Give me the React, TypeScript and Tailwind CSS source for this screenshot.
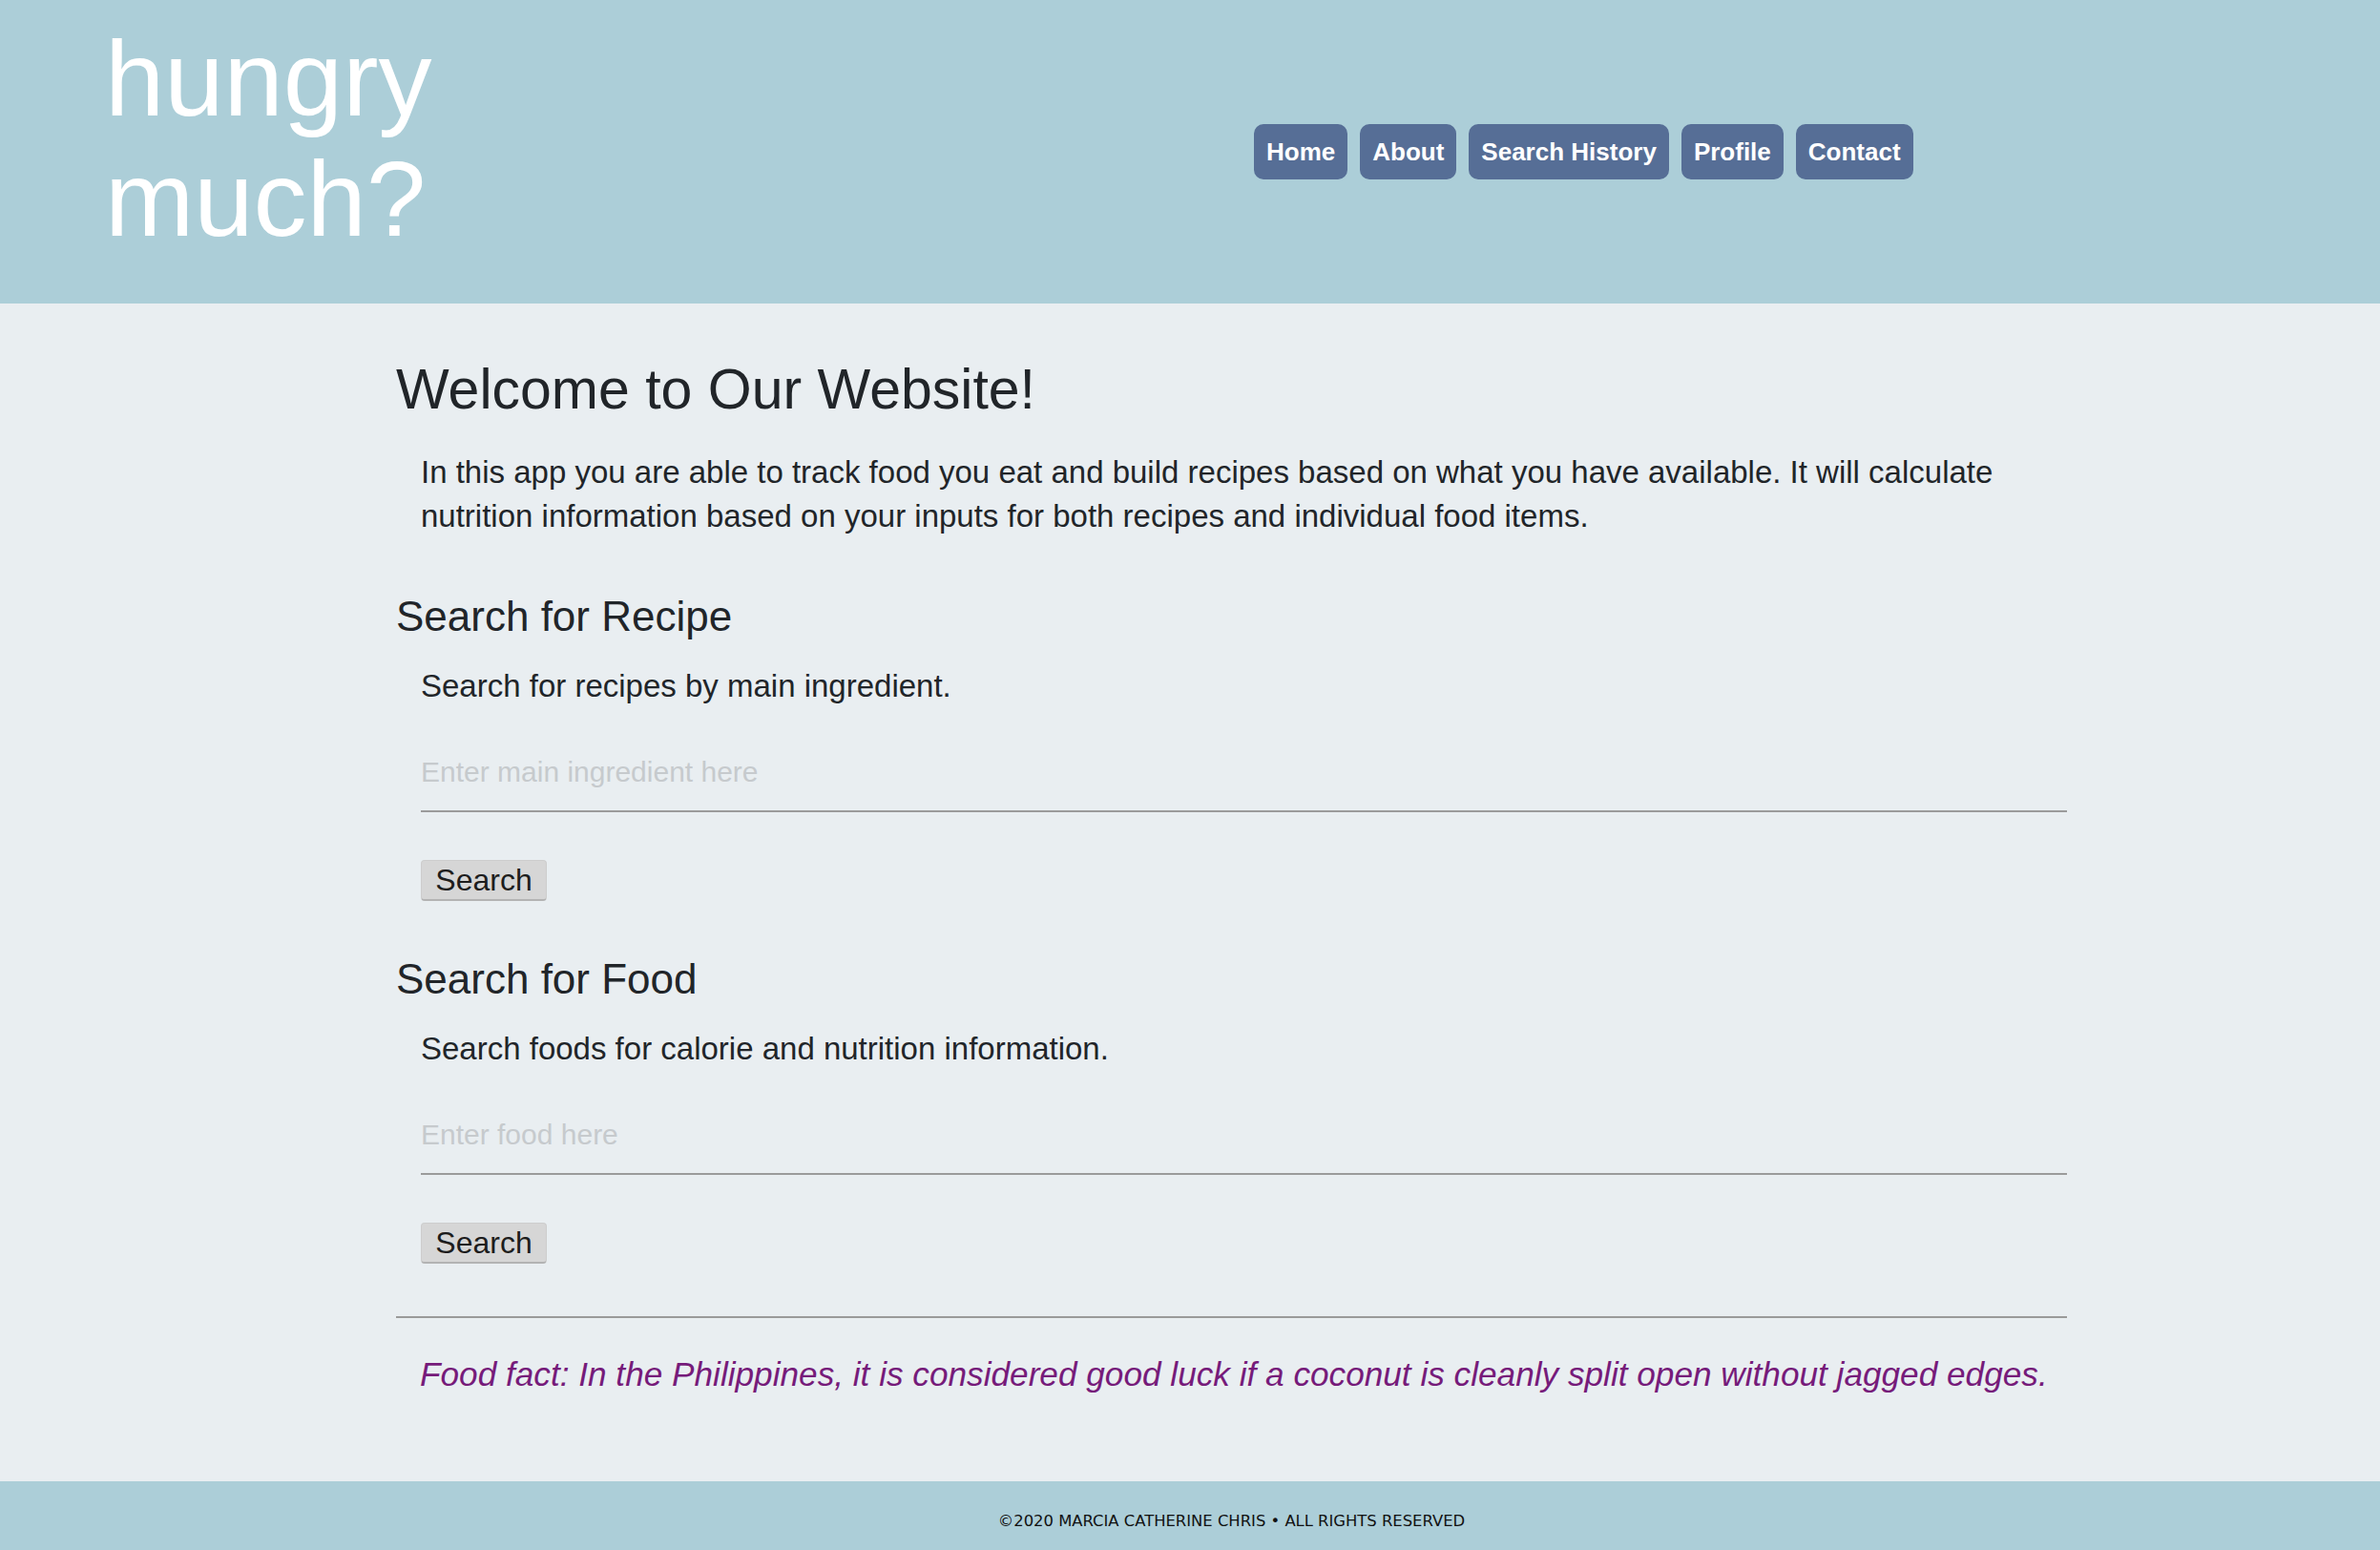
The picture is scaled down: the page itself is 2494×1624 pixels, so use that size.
import { useState } from "react"

const navItems = ["Home", "About", "Search History", "Profile", "Contact"]

function SearchSection({
  title,
  blurb,
  placeholder,
}: {
  title: string
  blurb: string
  placeholder: string
}) {
  const [query, setQuery] = useState("")

  return (
    <section className="mt-[55px]">
      <h2 className="text-[44px] leading-[53px] text-[#212529]">{title}</h2>
      <div className="pl-[26px]">
        <p className="mt-[24px] text-[33px] leading-[46px] text-[#212529]">{blurb}</p>
        <input
          type="text"
          value={query}
          onChange={(e) => setQuery(e.target.value)}
          placeholder={placeholder}
          className="mt-[24px] block w-full bg-transparent pt-[25px] pb-[22px] text-[30px] leading-[36px] text-[#212529] border-b-2 border-[#9b9b9b] outline-none placeholder:text-[#c6cacd]"
        />
        <button
          type="button"
          className="mt-[50px] block h-[43px] w-[132px] rounded-[4px] bg-[#d6d6d6] border border-[#cdcdcd] border-b-2 border-b-[#b3b3b3] text-[32px] leading-[38px] text-[#1d1d1d]"
        >
          Search
        </button>
      </div>
    </section>
  )
}

export default function App() {
  return (
    <div className="min-h-screen flex flex-col bg-[#e9eef1] font-['Liberation_Sans',Arial,sans-serif]">
      <header className="h-[318px] shrink-0 bg-[#acced8] flex items-start pl-[110px]">
        <h1 className="w-[1204px] shrink-0 pt-[20px] text-[112px] leading-[126px] font-normal text-white">
          hungry
          <br />
          much?
        </h1>
        <nav className="mt-[130px] flex gap-[13px]">
          {navItems.map((item) => (
            <a
              key={item}
              href="#"
              className="h-[58px] flex items-center rounded-[10px] bg-[#566e96] px-[13px] text-[26px] font-bold text-white"
            >
              {item}
            </a>
          ))}
        </nav>
      </header>

      <main className="flex-1 pt-[55px] pb-[90px]">
        <div className="ml-[415px] w-[1751px]">
          <h1 className="text-[59px] leading-[70px] text-[#212529]">Welcome to Our Website!</h1>
          <p className="mt-[29px] pl-[26px] text-[33px] leading-[46px] text-[#212529]">
            In this app you are able to track food you eat and build recipes based on what you have
            available. It will calculate nutrition information based on your inputs for both recipes and
            individual food items.
          </p>

          <SearchSection
            title="Search for Recipe"
            blurb="Search for recipes by main ingredient."
            placeholder="Enter main ingredient here"
          />
          <SearchSection
            title="Search for Food"
            blurb="Search foods for calorie and nutrition information."
            placeholder="Enter food here"
          />

          <hr className="mt-[55px] border-0 border-t-2 border-[#9a9a9a]" />
          <p className="mt-[38px] pl-[25px] text-[35.2px] leading-[42px] italic text-[#761b7a]">
            Food fact: In the Philippines, it is considered good luck if a coconut is cleanly split open
            without jagged edges.
          </p>
        </div>
      </main>

      <footer className="h-[72px] shrink-0 bg-[#acced8]">
        <p className="ml-[415px] w-[1751px] pt-[32px] text-center font-['DejaVu_Sans',Verdana,sans-serif] text-[16.4px] leading-[20px] text-[#111]">
          ©2020 MARCIA CATHERINE CHRIS • ALL RIGHTS RESERVED
        </p>
      </footer>
    </div>
  )
}
